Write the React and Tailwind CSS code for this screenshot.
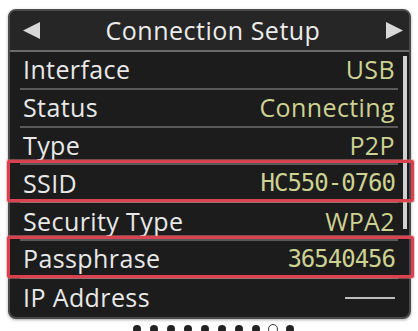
const rows = [
  { label: 'Interface', value: 'USB' },
  { label: 'Status', value: 'Connecting' },
  { label: 'Type', value: 'P2P' },
  { label: 'SSID', value: 'HC550-0760', mono: true, marked: true },
  { label: 'Security Type', value: 'WPA2' },
  { label: 'Passphrase', value: '36540456', mono: true, marked: true },
  { label: 'IP Address', dash: true },
]

function Arrow({ dir }) {
  return (
    <svg width="17" height="17" viewBox="0 0 17 17" className="shrink-0">
      {dir === 'left' ? (
        <polygon points="17,0 17,17 0,8.5" fill="#d8d8d8" />
      ) : (
        <polygon points="0,0 0,17 17,8.5" fill="#d8d8d8" />
      )}
    </svg>
  )
}

function Row({ label, value, mono, marked, dash, last }) {
  return (
    <div
      className={`relative flex h-[37.8px] items-center justify-between px-[3px] ${
        last ? '' : 'border-b-2 border-[#5a5a5a]'
      }`}
    >
      <span className="text-[25px] font-medium leading-none tracking-[0.4px] text-[#e8e8e8]">{label}</span>
      {dash ? (
        <span className="h-[2px] w-[50px] bg-[#bdbdbd]" />
      ) : (
        <span
          className={`leading-none text-[#cdd292] ${
            mono
              ? "font-['DejaVu_Sans_Mono',monospace] text-[24px] tracking-[-1px]"
              : 'text-[25px] font-medium tracking-[0.4px]'
          }`}
        >
          {value}
        </span>
      )}
      {marked && (
        <div className="pointer-events-none absolute -top-[5px] -bottom-[1px] -left-[13px] -right-[16px] rounded-[2px] border-[3px] border-[#d9424e] shadow-[0_0_0_1px_rgba(240,130,140,0.45)]" />
      )}
    </div>
  )
}

export default function App() {
  return (
    <div className="h-[331px] w-[418px] bg-white pt-[9px] font-['Open_Sans',sans-serif]">
      <div className="ml-[8px] w-[403px] rounded-[8px] border-2 border-[#4a4a4a] bg-[#1c1c1c] shadow-[0_1px_3px_rgba(0,0,0,0.35)]">
        <div className="flex h-[41px] items-center rounded-t-[6px] border-b-2 border-[#6a6a6a] bg-[#262626] pl-[13px] pr-[6px]">
          <Arrow dir="left" />
          <span className="flex-1 text-center text-[25px] font-medium leading-none tracking-[0.5px] text-[#ececec]">
            Connection Setup
          </span>
          <Arrow dir="right" />
        </div>
        <div className="flex pl-[10px] pr-[2px]">
          <div className="flex-1">
            {rows.map((r, i) => (
              <Row key={r.label} {...r} last={i === rows.length - 1} />
            ))}
          </div>
          <div className="ml-[5px] w-[4px]">
            <div className="mt-[4px] h-[173px] bg-[#d0d0d0]" />
          </div>
        </div>
      </div>
      <div className="mt-[5px] flex items-center gap-[9px] pl-[133px]">
        {Array.from({ length: 10 }).map((_, i) =>
          i === 8 ? (
            <span key={i} className="-mx-[1px] h-[10px] w-[10px] rounded-full border-[1.5px] border-[#333] bg-white" />
          ) : (
            <span key={i} className="h-[8px] w-[8px] rounded-full bg-[#222]" />
          )
        )}
      </div>
    </div>
  )
}
